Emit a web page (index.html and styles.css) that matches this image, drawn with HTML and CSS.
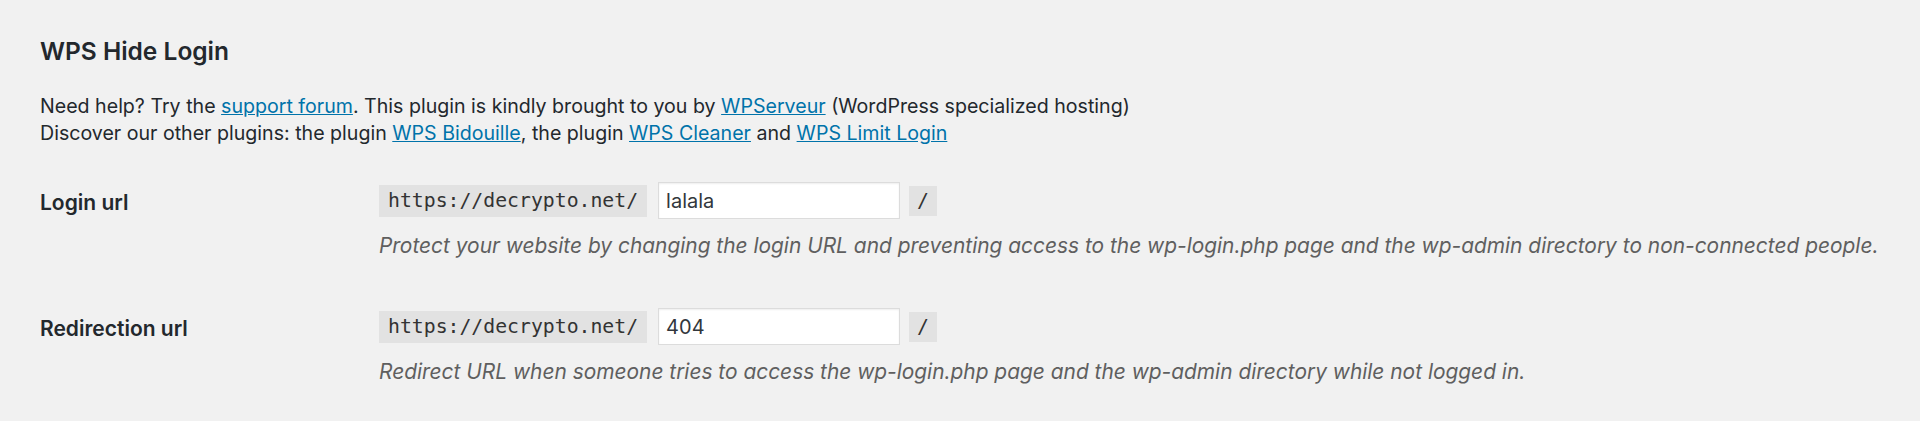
FILE: index.html
```html
<html>
    <head>
        <meta charset="UTF-8">
        <meta name="viewport" content="width=device-width, initial-scale=1.0">
        <title>WPS Hide Login</title>
        <link rel="stylesheet" href="styles.css">
    </head>
    <body>
        <div class="wrap">
            <h1>WPS Hide Login</h1>
            <p class="intro">Need help? Try the <a href="#">support forum</a>. This plugin is kindly brought to you by <a href="#">WPServeur</a> (WordPress specialized hosting)<br>
            Discover our other plugins: the plugin <a href="#">WPS Bidouille</a>, the plugin <a href="#">WPS Cleaner</a> and <a href="#">WPS Limit Login</a></p>

            <div class="form-table">
                <div class="form-row">
                    <label class="row-label" for="login-url">Login url</label>
                    <div class="row-field">
                        <div class="field-line">
                            <code>https://decrypto.net/</code>
                            <input id="login-url" type="text" value="lalala">
                            <code class="slash">/</code>
                        </div>
                        <p class="description">Protect your website by changing the login URL and preventing access to the wp-login.php page and the wp-admin directory to non-connected people.</p>
                    </div>
                </div>
                <div class="form-row">
                    <label class="row-label" for="redirect-url">Redirection url</label>
                    <div class="row-field">
                        <div class="field-line">
                            <code>https://decrypto.net/</code>
                            <input id="redirect-url" type="text" value="404">
                            <code class="slash">/</code>
                        </div>
                        <p class="description">Redirect URL when someone tries to access the wp-login.php page and the wp-admin directory while not logged in.</p>
                    </div>
                </div>
            </div>
        </div>
    </body>
</html>
```
FILE: styles.css
```css
body{
    margin: 0;
    padding: 0;
    background-color: #f1f1f1;
    color: #23282d;
    font-family: Inter, "Noto Sans", sans-serif;
}
.wrap{
    padding: 35px 0 0 40px;
}
h1{
    margin: 0 0 26px 0;
    font-size: 24.5px;
    line-height: 32px;
    font-weight: 600;
}
.intro{
    margin: 0;
    font-size: 19.6px;
    line-height: 27px;
}
a{
    color: #0073aa;
    text-decoration: underline;
}
.form-table{
    margin-top: 35px;
    display: flex;
    flex-direction: column;
    gap: 48px;
}
.form-row{
    display: flex;
}
.row-label{
    width: 339px;
    flex-shrink: 0;
    margin-top: 7px;
    font-size: 21px;
    line-height: 28px;
    font-weight: 600;
}
.field-line{
    display: flex;
    align-items: center;
}
code{
    font-family: "DejaVu Sans Mono", monospace;
    font-size: 19.8px;
    line-height: 32px;
    height: 32px;
    padding: 0 9px;
    background-color: #e2e2e2;
    color: #333;
}
input{
    box-sizing: border-box;
    width: 242px;
    height: 37px;
    margin: 0 9px 0 11px;
    padding: 0 7px;
    border: 1px solid #dcdcdc;
    box-shadow: inset 0 1px 2px rgba(0,0,0,.07);
    background-color: #fff;
    color: #32373c;
    font-family: Inter, "Noto Sans", sans-serif;
    font-size: 20px;
    outline: none;
}
.slash{
    height: 30px;
    line-height: 30px;
    padding: 0 8px;
}
.description{
    margin: 13px 0 0 0;
    font-size: 20.9px;
    line-height: 28px;
    font-style: italic;
    color: #5f5f5f;
}
```
